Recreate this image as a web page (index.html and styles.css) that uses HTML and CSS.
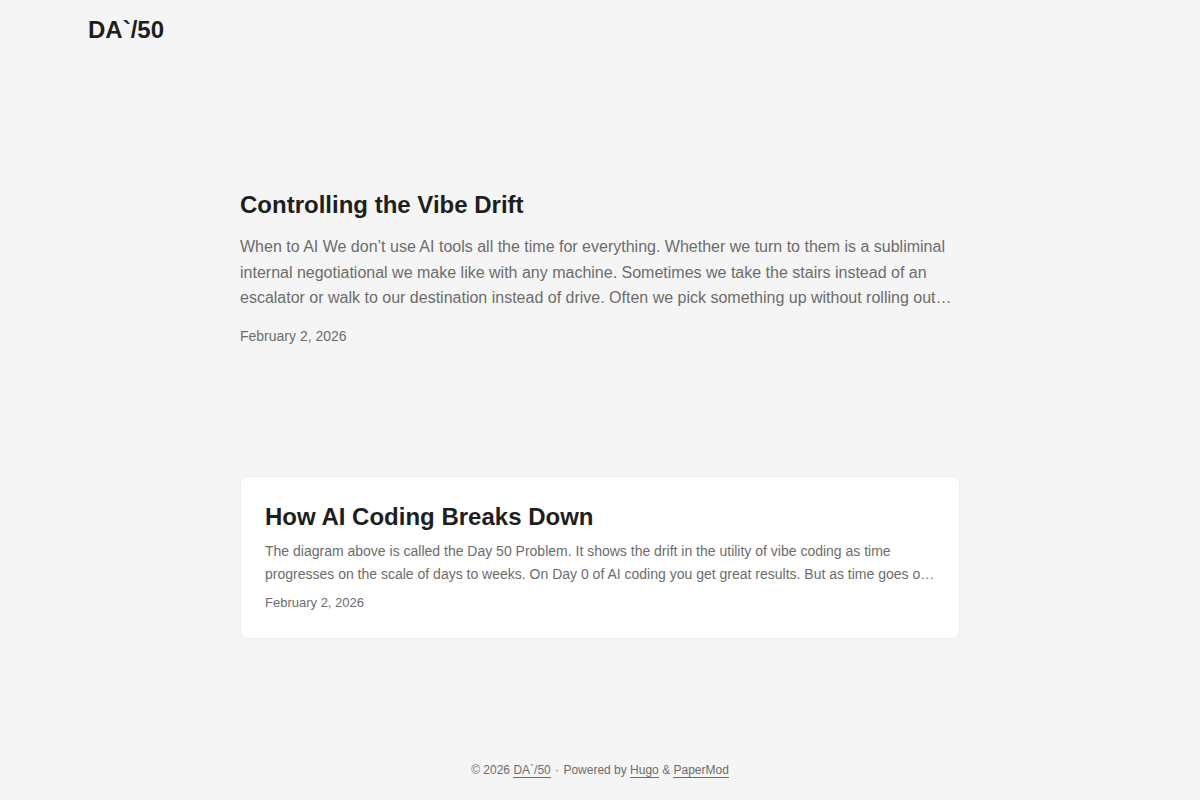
FILE: index.html
```html
<!DOCTYPE html>
<html lang="en">
<head>
<meta charset="utf-8">
<title>DA`/50</title>
<link rel="stylesheet" href="styles.css">
</head>
<body>
<header class="header">
  <nav class="nav">
    <div class="logo"><a href="#">DA`/50</a></div>
  </nav>
</header>
<main class="main">
  <article class="first-entry">
    <header class="entry-header">
      <h2>Controlling the Vibe Drift</h2>
    </header>
    <div class="entry-content">
      <p>When to AI We don’t use AI tools all the time for everything. Whether we turn to them is a subliminal internal negotiational we make like with any machine. Sometimes we take the stairs instead of an escalator or walk to our destination instead of drive. Often we pick something up without rolling out heavy equipment to lift it for us.</p>
    </div>
    <footer class="entry-footer"><span>February 2, 2026</span></footer>
  </article>

  <article class="post-entry">
    <header class="entry-header">
      <h2>How AI Coding Breaks Down</h2>
    </header>
    <div class="entry-content">
      <p>The diagram above is called the Day 50 Problem. It shows the drift in the utility of vibe coding as time progresses on the scale of days to weeks. On Day 0 of AI coding you get great results. But as time goes on, the results start to slip.</p>
    </div>
    <footer class="entry-footer"><span>February 2, 2026</span></footer>
  </article>
</main>
<footer class="footer">
  <span>© 2026 <a href="#">DA`/50</a></span> · <span>Powered by <a href="#">Hugo</a> &amp; <a href="#">PaperMod</a></span>
</footer>
</body>
</html>
```
FILE: styles.css
```css
:root {
  --gap: 24px;
  --content-gap: 20px;
  --nav-width: 1024px;
  --main-width: 720px;
  --header-height: 60px;
  --footer-height: 60px;
  --radius: 8px;
  --theme: rgb(245, 245, 245);
  --entry: rgb(255, 255, 255);
  --primary: rgb(30, 30, 30);
  --secondary: rgb(108, 108, 108);
  --border: rgb(238, 238, 238);
}

*, *::before, *::after {
  box-sizing: border-box;
}

html, body {
  margin: 0;
  padding: 0;
}

body {
  font-family: "Liberation Sans", Arial, sans-serif;
  font-size: 18px;
  line-height: 1.6;
  background: var(--theme);
  color: var(--primary);
  word-break: break-word;
}

a {
  color: inherit;
  text-decoration: none;
}

h2, p {
  margin: 0;
}

/* header */
.nav {
  display: flex;
  flex-wrap: wrap;
  justify-content: space-between;
  max-width: calc(var(--nav-width) + var(--gap) * 2);
  margin-inline: auto;
  line-height: var(--header-height);
}

.logo {
  display: flex;
  margin: auto var(--gap);
}

.logo a {
  font-size: 24px;
  font-weight: 700;
}

/* main column */
.main {
  position: relative;
  min-height: calc(100vh - var(--header-height) - var(--footer-height));
  max-width: calc(var(--main-width) + var(--gap) * 2);
  margin: auto;
  padding: var(--gap);
}

.first-entry {
  display: flex;
  flex-direction: column;
  justify-content: center;
  min-height: 320px;
  margin: var(--gap) 0 calc(var(--gap) * 2) 0;
}

.first-entry .entry-header h2 {
  font-size: 24px;
  line-height: 1.3;
  font-weight: 700;
}

.first-entry .entry-content {
  margin: 14px 0;
  font-size: 16px;
  line-height: 1.6;
  color: var(--secondary);
  overflow: hidden;
  display: -webkit-box;
  -webkit-box-orient: vertical;
  -webkit-line-clamp: 3;
}

.first-entry .entry-footer {
  font-size: 14px;
  color: var(--secondary);
}

.post-entry {
  position: relative;
  margin-bottom: var(--gap);
  padding: var(--gap);
  background: var(--entry);
  border: 1px solid var(--border);
  border-radius: var(--radius);
}

.post-entry .entry-header h2 {
  font-size: 24px;
  line-height: 1.3;
  font-weight: 700;
}

.post-entry .entry-content {
  margin: 8px 0;
  font-size: 14px;
  line-height: 1.6;
  color: var(--secondary);
  overflow: hidden;
  display: -webkit-box;
  -webkit-box-orient: vertical;
  -webkit-line-clamp: 2;
}

.post-entry .entry-footer {
  font-size: 13px;
  color: var(--secondary);
}

/* footer */
.footer {
  max-width: calc(var(--main-width) + var(--gap) * 2);
  margin: auto;
  padding: calc((var(--footer-height) - var(--gap)) / 2) var(--gap);
  text-align: center;
  font-size: 12px;
  line-height: 24px;
  color: var(--secondary);
}

.footer span {
  margin-inline-start: 1px;
  margin-inline-end: 1px;
}

.footer a {
  border-bottom: 1px solid var(--secondary);
}
```
